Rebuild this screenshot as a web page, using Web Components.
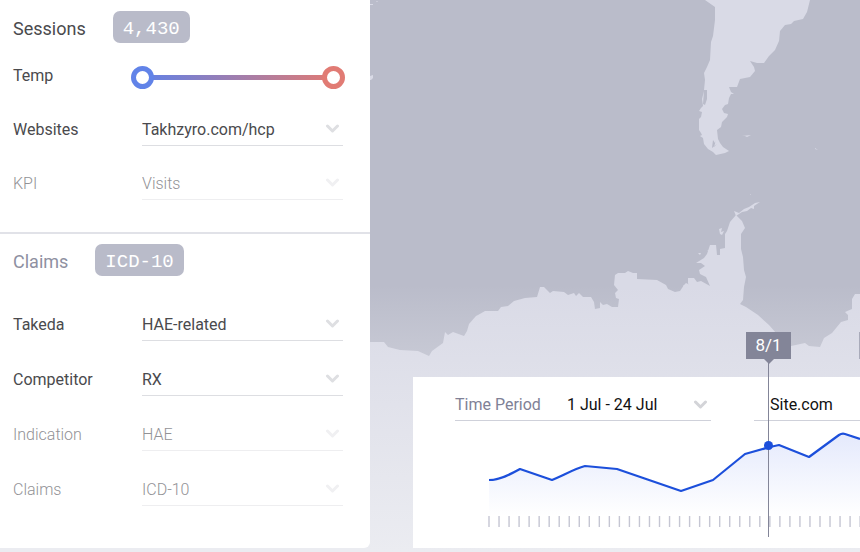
<!DOCTYPE html>
<html lang="en">
<head>
<meta charset="utf-8">
<title>Sessions and claims explorer</title>
<style>
  html, body { margin: 0; height: 100%; }
  body { font: 16px/20px Roboto, "Liberation Sans", sans-serif; color: #4a4a4d; background: #ebecf1; overflow: hidden; }
</style>
</head>
<body>
<explorer-page></explorer-page>
<script>
class Base extends HTMLElement {
  connectedCallback() {
    if (this.shadowRoot) return;
    this.attachShadow({ mode: 'open' }).innerHTML = this.view();
  }
}
const attr = (el, name) => el.getAttribute(name) || '';

customElements.define('count-badge', class extends Base {
  view() { return `<style>
    :host { display: block; padding: 0 10px; border-radius: 7px; background: #b9bbc9; color: #fff;
      font: 19px/36px "Liberation Mono", monospace; height: 32px; box-sizing: border-box; }
  </style><slot></slot>`; }
});

customElements.define('select-field', class extends Base {
  view() {
    const label = attr(this, 'label');
    return `<style>
    :host { display: grid; grid-template-columns: var(--label, 129px) minmax(0, 1fr); align-items: center; }
    :host([muted]) { font-weight: 300; color: #929296; --line: #eeeef0; --arrow: #f0f0f2; }
    :host([wide]) { border-bottom: 1px solid #cfd1da; height: 43px; padding-top: 11px; box-sizing: border-box; width: 256px; flex: none; --label: 112px; }
    :host([bare]) { --label: 0px; }
    label { white-space: nowrap; }
    :host([wide]) label { color: #808196; }
    .box { display: grid; align-items: center; height: 33px; box-sizing: border-box; border-bottom: 1px solid var(--line, #dddee2); }
    :host([wide]) .box { border: 0; height: 31px; color: #111; }
    :host([bare]) .box { padding-left: 16px; }
    select, svg { grid-area: 1 / 1; }
    select { appearance: none; border: 0; margin: 0; padding: 2px 0 0; width: 100%; height: 100%; background: none; color: inherit; font: inherit; outline-offset: 2px; }
    :host([wide]) select { padding: 0; }
    svg { justify-self: end; margin-right: 3px; pointer-events: none; }
    :host([wide]) svg { --arrow: #d3d4d8; }
    path { fill: none; stroke: var(--arrow, #dedfe2); stroke-width: 3; stroke-linecap: round; stroke-linejoin: round; }
    </style>
    <label for="s">${label}</label>
    <div class="box"><select id="s" ${label ? '' : 'aria-label="Site"'}><option>${attr(this, 'value')}</option></select>
    <svg width="15" height="10" viewBox="0 0 15 10" aria-hidden="true"><path d="M2.5 2 7.5 7 12.5 2"/></svg></div>`;
  }
});

customElements.define('temp-range', class extends Base {
  view() { return `<style>
    :host { display: grid; grid-template-columns: 129px minmax(0, 1fr); align-items: center; height: 32px; }
    .rail { display: grid; align-items: center; margin: 0 -2px 0 -11px; padding-top: 3px; }
    .rail > * { grid-area: 1 / 1; }
    .bar { height: 5px; margin: 0 12px; background: linear-gradient(90deg, #6181e6, #e07a74); }
    input { appearance: none; width: 100%; height: 23px; margin: 0; background: none; pointer-events: none; }
    input::-webkit-slider-thumb { appearance: none; pointer-events: auto; box-sizing: border-box; width: 23px; height: 23px; border-radius: 50%; background: #fff; border: 5px solid var(--c); }
    #low { --c: #6183e8; } #high { --c: #e17b74; }
  </style>
  <label for="low">Temp</label>
  <div class="rail"><span class="bar"></span>
  <input id="low" type="range" min="0" max="100" value="0">
  <input id="high" type="range" min="0" max="100" value="100" aria-label="Highest temp"></div>`; }
});

customElements.define('filter-section', class extends Base {
  view() { return `<style>
    :host { display: block; padding: 11px 27px 32px 13px; --gap: 21px; }
    :host([second]) { border-top: 2px solid #e1e2e8; padding: 10px 27px 42px 13px; --gap: 22px; --space: 32px; --title: #8f90a1; }
    header { display: flex; gap: 27px; align-items: center; margin-bottom: var(--space, 17px); }
    h2 { margin: 0; padding-top: 3px; font: inherit; font-size: 18px; line-height: 24px; color: var(--title, inherit); }
    .rows { display: grid; gap: var(--gap); }
  </style>
  <header><h2>${attr(this, 'heading')}</h2><count-badge>${attr(this, 'badge')}</count-badge></header>
  <div class="rows"><slot></slot></div>`; }
});

customElements.define('world-map', class extends Base {
  view() { return `<style>
    :host { display: block; overflow: hidden; }
    svg { display: block; width: 100%; height: 100%; }
  </style>
  <svg viewBox="370 0 490 552" preserveAspectRatio="xMinYMin slice" aria-hidden="true">
    <defs><linearGradient id="haze" x1="0" y1="0" x2="0" y2="1">
      <stop offset="0" stop-color="#ebecf1" stop-opacity="0"/><stop offset="1" stop-color="#ebecf1"/>
    </linearGradient></defs>
    <rect x="370" width="2000" height="2000" fill="#babcca"/>
    <g fill="#d9dae6">
      <path d="M705 0 715 7V20L713 36 711 42 710 60 707 67 704 73 705 80 704 90H707V99L705 105 703 104 704 91 702 99 703 106 701 108 699 111 702 112 701 117 699 119V130L701 133 702 135 700 136 703 138 704 144 708 149 713 152 716 155 725 153 729 151 723 147 720 143 718 139 717 130 721 127 722 122 727 117 728 114 724 113 722 109 725 105 728 104 729 98 731 94 734 94 731 92 729 87H737L740 79 750 77 755 71 754 67 750 61 757 63H764L769 56 775 50 779 41 780 31 785 25 791 24 794 21 803 19 807 12 810 0Z"/>
      <path fill="#b9bbc9" d="M713 140 715 143 716 140 714 147 717 144 712 148Z"/>
      <path d="M742 136 751 135 747 137 745 136ZM815 148 818 150 815 149ZM370 4H373V5H370ZM376 1H378L377 2ZM370 76 373 75V78L371 80H370Z"/>
      <path d="M370 342H384L388 347 400 350 418 351 429 356 432 351 443 343 445 332 448 335 453 332 464 336 467 331 469 324 476 316 478 315 485 311H498L501 307 508 306 514 301 525 298 537 297 540 287 544 287 550 293 553 291 564 292 568 295 574 293 576 296 579 293 583 297 591 297 594 302 595 309 600 308V302L603 305 607 304 612 307H618L619 299 616 298 615 293 618 290 614 285 615 275 618 273 625 273 628 271 633 273 637 273V279L657 280 666 285 668 289 675 292 680 291 684 285 689 286 688 283 688 278 694 278 697 282 701 281 710 286 706 277 700 274 699 270 705 266 701 263 696 263 704 258 707 254 710 245 716 245 717 255H720V249L725 248V234L727 231 730 222 736 215 742 221 745 228 741 234V249L743 257 744 270 746 277 744 287 743 300 740 304 746 307 758 315 769 325 776 333 789 337 791 346 805 343 809 346 820 347 824 338 832 333 841 322 848 320V315L845 312 852 309 852 299 855 294 860 294V600H370Z"/>
      <path d="M734 211 739 213 744 209 749 207 755 203 760 202 754 206 754 209 751 208 747 211 742 212 736 216ZM719 229 722 228 721 232 724 231 722 235 720 234ZM698 253 701 253 700 255ZM707 250H709V251ZM683 286 686 283 690 285 693 284 691 287 684 288ZM750 194H751V195Z"/>
    </g>
    <rect x="370" y="285" width="2000" height="267" fill="url(#haze)"/>
    <rect x="370" y="551" width="2000" height="1449" fill="#ebecf1"/>
  </svg>`; }
});

customElements.define('trend-chart', class extends Base {
  view() {
    const line = 'M1 59C12 59 23 53 32 48L64 59C76 54 86 48 97 45L129 48 193 70 225 59 257 33 282 26 291 24 321 36 351 14Q354 12 357 13L372 18';
    const ticks = Array.from({ length: 38 }, (_, i) => `M${(1 + i * 10.03).toFixed(2)} 95v11`).join('');
    return `<style>
    :host { display: block; overflow: hidden; }
    svg { display: block; width: 100%; height: 127px; }
    .line { fill: none; stroke: #1c4fdb; stroke-width: 2.2; stroke-linejoin: round; }
    .ticks { stroke: #c5c6d3; stroke-width: 1.4; }
    </style>
    <svg viewBox="0 0 372 127" preserveAspectRatio="xMinYMin slice" role="img" aria-label="Site visits by day">
      <defs><linearGradient id="area" gradientUnits="userSpaceOnUse" x1="0" y1="12" x2="0" y2="95">
        <stop offset="0" stop-color="#e4e9fc"/><stop offset="1" stop-color="#fff"/></linearGradient></defs>
      <path d="${line}V95H1Z" fill="url(#area)"/><path class="line" d="${line}"/><path class="ticks" d="${ticks}"/>
    </svg>`;
  }
});

customElements.define('date-marker', class extends Base {
  view() { return `<style>
    :host { position: absolute; display: flex; flex-direction: column; align-items: center; width: 45px; height: 205px; color: #fff; font-size: 17px; }
    .tag { width: 100%; background: #838598; text-align: center; line-height: 27px; height: 27px; flex: none; }
    .tip { border: 5px solid transparent; border-top-color: #838598; border-bottom: 0; }
    .stem { width: 1px; flex: 1; background: #838598; margin-top: -5px; }
    .dot { position: absolute; top: 109px; width: 9px; height: 9px; border-radius: 50%; background: #1c4fdb; }
  </style><div class="tag"><slot></slot></div><div class="tip"></div><div class="stem"></div><div class="dot"></div>`; }
});

customElements.define('period-card', class extends Base {
  view() { return `<style>
    :host { display: block; position: relative; background: #fff; }
    .inner { overflow: hidden; padding: 1px 0 0 42px; }
    .filters { display: flex; gap: 43px; }
    trend-chart { margin-left: 33px; }
    date-marker { left: 333px; top: -45px; }
    .next { position: absolute; right: 0; top: -45px; width: 1px; height: 27px; background: #a9abba; }
  </style>
  <div class="inner">
    <div class="filters">
      <select-field wide label="Time Period" value="1 Jul - 24 Jul"></select-field>
      <select-field wide bare value="Site.com"></select-field>
    </div>
    <trend-chart></trend-chart>
  </div>
  <date-marker>8/1</date-marker>
  <div class="next"></div>`; }
});

customElements.define('explorer-page', class extends Base {
  view() { return `<style>
    :host { display: grid; grid-template-columns: minmax(0, 370px) minmax(0, 1fr); grid-template-rows: minmax(100vh, auto); }
    aside { align-self: start; background: #fff; border-radius: 0 0 6px 0; }
    .stage { display: grid; min-width: 0; }
    .stage > * { grid-area: 1 / 1; min-width: 0; }
    period-card { align-self: end; margin: 0 0 4px 43px; }
  </style>
  <aside>
    <filter-section heading="Sessions" badge="4,430">
      <temp-range></temp-range>
      <select-field label="Websites" value="Takhzyro.com/hcp"></select-field>
      <select-field muted label="KPI" value="Visits"></select-field>
    </filter-section>
    <filter-section second heading="Claims" badge="ICD-10">
      <select-field label="Takeda" value="HAE-related"></select-field>
      <select-field label="Competitor" value="RX"></select-field>
      <select-field muted label="Indication" value="HAE"></select-field>
      <select-field muted label="Claims" value="ICD-10"></select-field>
    </filter-section>
  </aside>
  <main class="stage"><world-map></world-map><period-card></period-card></main>`; }
});
</script>
</body>
</html>
